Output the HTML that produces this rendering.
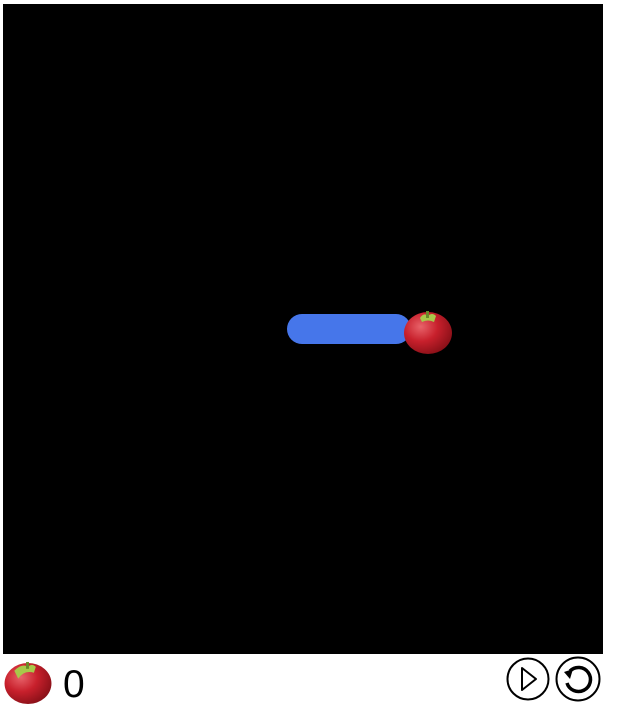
<!DOCTYPE html>
<html><head><style>
body{margin:0;width:618px;height:709px;background:#fff;position:relative;overflow:hidden;font-family:"Liberation Sans",sans-serif}
#c{position:absolute;left:3px;top:4px;width:600px;height:650px;background:#000}
.ap{position:absolute}
</style></head><body>
<div id="c"></div>
<div style="position:absolute;left:287px;top:314px;width:124px;height:30px;border-radius:15px;background:#4676ea"></div>
<svg class="ap" style="left:404px;top:310px" width="48" height="44" viewBox="0 0 48 44">
<defs><radialGradient id="g" cx="35%" cy="35%" r="70%"><stop offset="0" stop-color="#e8636a"/><stop offset=".5" stop-color="#c8202c"/><stop offset="1" stop-color="#8a1018"/></radialGradient></defs>
<ellipse cx="24" cy="23" rx="24" ry="21" fill="url(#g)"/>
<path d="M16 8 Q20 2 24 6 Q28 2 32 6 L30 12 Q24 9 18 12Z" fill="#a8c84a"/>
<rect x="22" y="1" width="3" height="7" fill="#6a8a2a"/>
</svg>
<svg class="ap" style="left:4px;top:661px" width="48" height="43" viewBox="0 0 48 44">
<ellipse cx="24" cy="23" rx="24" ry="21" fill="url(#g)"/>
<path d="M10 10 Q18 2 24 6 Q28 2 32 6 L30 12 Q20 9 14 18Z" fill="#a8c84a"/>
<rect x="22" y="1" width="3" height="7" fill="#6a8a2a"/>
</svg>
<div style="position:absolute;left:63px;top:663px;font-size:39px;line-height:44px;color:#000">0</div>
<svg style="position:absolute;left:500px;top:652px" width="110" height="56">
<circle cx="28" cy="27" r="20.5" fill="none" stroke="#000" stroke-width="2"/>
<path d="M22 16 L36 27 L22 38Z" fill="none" stroke="#000" stroke-width="2" stroke-linejoin="round"/>
<circle cx="78" cy="27" r="21.5" fill="none" stroke="#000" stroke-width="2"/>
<path d="M70 19 A12 12 0 1 1 67 31" fill="none" stroke="#000" stroke-width="3.5"/>
<path d="M64 20 L73 17 L70 27Z" fill="#000"/>
</svg>
</body></html>
